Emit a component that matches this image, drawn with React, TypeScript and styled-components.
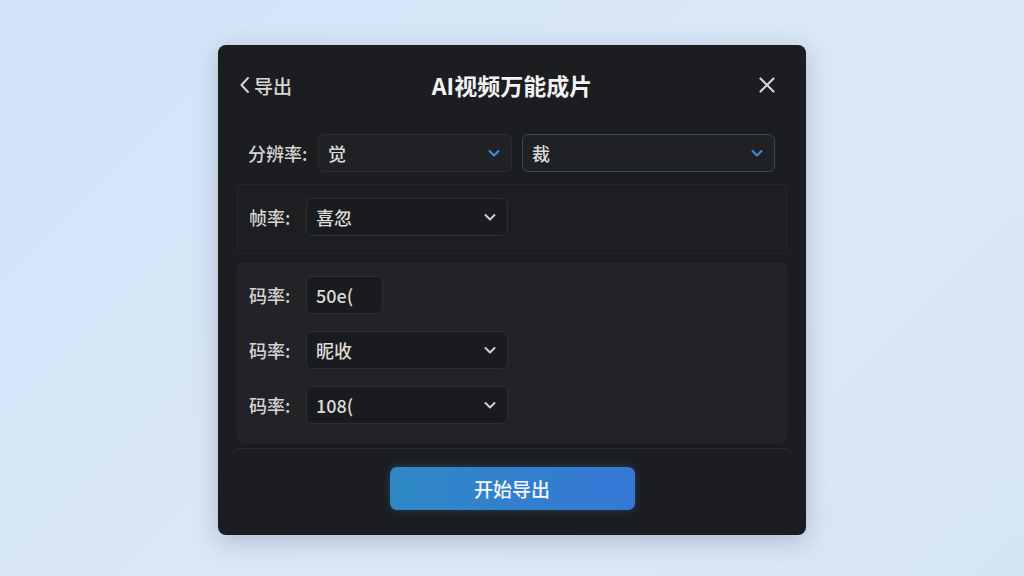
import { FC } from 'react'
import styled, { createGlobalStyle } from 'styled-components'

const GlobalStl = createGlobalStyle`
  html, body { margin: 0; padding: 0; }
  body {
    width: 1024px;
    height: 576px;
    overflow: hidden;
    background: linear-gradient(135deg, #d3e4f8 0%, #dbe8f6 60%, #d6e5f6 100%);
    font-family: 'Noto Sans CJK SC', 'Noto Sans', sans-serif;
  }
`

const PageStl = styled.div`
  display: flex;
  justify-content: center;
  padding-top: 45px;
`

const DialogStl = styled.div`
  width: 588px;
  height: 490px;
  box-sizing: border-box;
  background: #1c1d20;
  border-radius: 8px;
  box-shadow: 0 6px 24px rgba(40, 60, 90, 0.25);
  display: flex;
  flex-direction: column;
  padding: 0 19px;
`

const HeaderStl = styled.header`
  height: 80px;
  display: grid;
  grid-template-columns: 1fr auto 1fr;
  align-items: center;
`

const BackStl = styled.div`
  display: flex;
  align-items: center;
  gap: 2px;
  color: #d6d6d6;
  font-size: 19px;
  font-weight: 500;
  margin-left: 1px;
`

const TitleStl = styled.h1`
  margin: 0;
  font-size: 23px;
  font-weight: 600;
  color: #f2f2f2;
  text-align: center;
`

const CloseStl = styled.div`
  justify-self: end;
  width: 24px;
  display: flex;
  justify-content: center;
  margin-right: 8px;
`

const RowStl = styled.div<{ $pad?: string }>`
  display: flex;
  align-items: center;
  padding: ${({ $pad }) => $pad ?? '0 12px 0 11px'};
`

const LabelStl = styled.span<{ $w: number }>`
  width: ${({ $w }) => $w}px;
  flex: none;
  color: #d4d4d4;
  font-size: 18px;
  font-weight: 500;
  white-space: nowrap;
`

const SelectStl = styled.div<{ $w: number; $active?: boolean; $bg?: string }>`
  width: ${({ $w }) => $w}px;
  height: 38px;
  box-sizing: border-box;
  display: flex;
  align-items: center;
  justify-content: space-between;
  padding: 0 10px 0 9px;
  background: ${({ $bg }) => $bg ?? '#1a1b1e'};
  border: 1px solid ${({ $active }) => ($active ? '#2b4d6d' : '#2c2e32')};
  border-radius: 6px;
  color: #dadada;
  font-size: 18px;
  font-weight: 500;
  overflow: hidden;
  white-space: nowrap;
`

const PanelStl = styled.section<{ $bg: string; $h: number; $pt: number; $gap?: number }>`
  height: ${({ $h }) => $h}px;
  box-sizing: border-box;
  background: ${({ $bg }) => $bg};
  border: 1px solid #25272b;
  border-radius: 6px;
  padding-top: ${({ $pt }) => $pt}px;
  display: flex;
  flex-direction: column;
  gap: ${({ $gap }) => $gap ?? 0}px;
`

const SpacerStl = styled.div<{ $h?: number; $w?: number }>`
  flex: none;
  height: ${({ $h }) => $h ?? 0}px;
  width: ${({ $w }) => $w ?? 0}px;
`

const DividerStl = styled.div`
  height: 1px;
  background: #2a2c30;
  margin-top: 5px;
`

const FooterStl = styled.footer`
  flex: 1;
  display: flex;
  justify-content: center;
  padding-top: 18px;
`

const ButtonStl = styled.button`
  width: 245px;
  height: 43px;
  border: none;
  border-radius: 7px;
  background: linear-gradient(90deg, #2f88c4 0%, #3578d6 100%);
  box-shadow: 0 0 10px rgba(50, 130, 210, 0.35);
  color: #f4f7fb;
  font-family: inherit;
  font-size: 19px;
  font-weight: 500;
`

const Chevron: FC<{ color: string }> = ({ color }) => (
  <svg width="14" height="14" viewBox="0 0 14 14" fill="none">
    <path d="M2.5 5l4.5 4.5L11.5 5" stroke={color} strokeWidth="2" strokeLinecap="round" strokeLinejoin="round" />
  </svg>
)

const Field: FC<{ value: string; w: number; active?: boolean; chevron?: string; bg?: string }> = ({ value, w, active, chevron, bg }) => (
  <SelectStl $w={w} $active={active} $bg={bg}>
    <span>{value}</span>
    {chevron && <Chevron color={chevron} />}
  </SelectStl>
)

export default function App() {
  return (
    <>
      <GlobalStl />
      <PageStl>
        <DialogStl>
          <HeaderStl>
            <BackStl>
              <svg width="14" height="20" viewBox="0 0 14 20" fill="none">
                <path d="M10 3L3.5 10l6.5 7" stroke="#d6d6d6" strokeWidth="2" strokeLinecap="round" strokeLinejoin="round" />
              </svg>
              导出
            </BackStl>
            <TitleStl>AI视频万能成片</TitleStl>
            <CloseStl>
              <svg width="18" height="18" viewBox="0 0 18 18" fill="none">
                <path d="M2.5 2.5l13 13M15.5 2.5l-13 13" stroke="#d4d4d4" strokeWidth="2.2" strokeLinecap="round" />
              </svg>
            </CloseStl>
          </HeaderStl>

          <RowStl $pad="9px 12px 0 11px">
            <LabelStl $w={70}>分辨率:</LabelStl>
            <Field value="觉" w={194} chevron="#3d8ee0" bg="#202124" />
            <SpacerStl $w={10} />
            <Field value="裁" w={253} chevron="#3d8ee0" active bg="#202124" />
          </RowStl>

          <SpacerStl $h={12} />
          <PanelStl $bg="#1d1e21" $h={70} $pt={13}>
            <RowStl>
              <LabelStl $w={57}>帧率:</LabelStl>
              <Field value="喜忽" w={202} chevron="#d0d0d0" />
            </RowStl>
          </PanelStl>

          <SpacerStl $h={9} />
          <PanelStl $bg="#222326" $h={180} $pt={12} $gap={17}>
            <RowStl>
              <LabelStl $w={57}>码率:</LabelStl>
              <Field value="50e(" w={77} />
            </RowStl>
            <RowStl>
              <LabelStl $w={57}>码率:</LabelStl>
              <Field value="昵收" w={202} chevron="#d0d0d0" />
            </RowStl>
            <RowStl>
              <LabelStl $w={57}>码率:</LabelStl>
              <Field value="108(" w={202} chevron="#d0d0d0" />
            </RowStl>
          </PanelStl>

          <DividerStl />
          <FooterStl>
            <ButtonStl>开始导出</ButtonStl>
          </FooterStl>
        </DialogStl>
      </PageStl>
    </>
  )
}
